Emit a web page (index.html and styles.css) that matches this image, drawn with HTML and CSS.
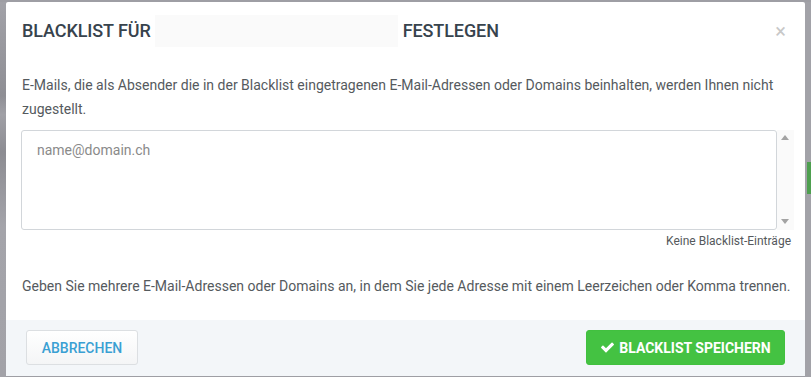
FILE: index.html
```html
<!DOCTYPE html>
<html lang="de">
<head>
<meta charset="utf-8">
<title>Blacklist</title>
<link rel="stylesheet" href="styles.css">
</head>
<body>
<div class="backdrop">
  <div class="side-strip"></div>
  <div class="modal">
    <div class="modal-header">
      <h4 class="modal-title">BLACKLIST FÜR <span class="redacted"></span> FESTLEGEN</h4>
      <span class="close">×</span>
    </div>
    <div class="modal-body">
      <p class="intro">E-Mails, die als Absender die in der Blacklist eingetragenen E-Mail-Adressen oder Domains beinhalten, werden Ihnen nicht zugestellt.</p>
      <div class="field">
        <div class="textarea"><span class="placeholder">name@domain.ch</span></div>
        <div class="scrollbar">
          <span class="arrow up"></span>
          <span class="arrow down"></span>
        </div>
      </div>
      <div class="count">Keine Blacklist-Einträge</div>
      <p class="hint">Geben Sie mehrere E-Mail-Adressen oder Domains an, in dem Sie jede Adresse mit einem Leerzeichen oder Komma trennen.</p>
    </div>
    <div class="modal-footer">
      <button class="btn btn-default">ABBRECHEN</button>
      <button class="btn btn-success"><svg class="check" viewBox="0 300 1792 1250" width="15" height="11"><path d="M1671 566q0 40-28 68l-724 724-136 136q-28 28-68 28t-68-28l-136-136-362-362q-28-28-28-68t28-68l136-136q28-28 68-28t68 28l294 295 656-657q28-28 68-28t68 28l136 136q28 28 28 68z" fill="#fff"/></svg>BLACKLIST SPEICHERN</button>
    </div>
  </div>
  <div class="side-right"><span class="green"></span></div>
</div>
</body>
</html>
```
FILE: styles.css
```css
html, body {
  margin: 0;
  padding: 0;
  height: 100%;
}
body {
  background: #9e9ea4;
  font-family: Roboto, "Liberation Sans", sans-serif;
  color: #555a5e;
  overflow: hidden;
}
.backdrop {
  display: flex;
  height: 100%;
  padding-top: 2px;
  box-sizing: border-box;
}
.side-strip {
  width: 6px;
  flex: none;
  background: linear-gradient(180deg, #a2a2a8 0%, #8e8e94 25%, #a0a0a6 30%, #8c8c92 40%, #a4a4aa 60%, #a2a2a8 100%);
}
.side-right {
  flex: 1;
  background: #a2a2a8;
  position: relative;
}
.green {
  position: absolute;
  left: 2px;
  top: 160px;
  width: 4px;
  height: 32px;
  background: #3f9f3f;
  opacity: 0.85;
}
.modal {
  width: 799px;
  flex: none;
  height: 374px;
  background: #fff;
  display: flex;
  flex-direction: column;
  border-radius: 2px 2px 0 0;
}
.modal-header {
  display: flex;
  align-items: center;
  justify-content: space-between;
  padding: 13px 16px 13px 16px;
}
.modal-title {
  margin: 0;
  font-size: 18px;
  font-weight: 500;
  line-height: 32px;
  color: #37434d;
  display: flex;
  align-items: center;
  letter-spacing: -0.1px;
}
.redacted {
  display: inline-block;
  width: 243px;
  height: 32px;
  background: #fafafa;
  margin: 0 5px 0 4px;
}
.close {
  font-size: 20px;
  color: #c8c8c8;
  line-height: 20px;
  margin-right: 3px;
}
.modal-body {
  padding: 13px 11px 0 16px;
  flex: 1;
}
.intro, .hint {
  margin: 0;
  font-size: 14px;
  line-height: 24px;
}
.intro {
  margin-bottom: 9px;
}
.field {
  display: flex;
  height: 100px;
  margin-left: -1px;
}
.textarea {
  flex: 1;
  border: 1px solid #d2d6da;
  border-radius: 3px;
  padding: 9px 15px;
  box-sizing: border-box;
}
.placeholder {
  font-size: 14px;
  line-height: 20px;
  color: #8a8a8a;
}
.scrollbar {
  width: 17px;
  background: #fafafa;
  position: relative;
}
.arrow {
  position: absolute;
  left: 4px;
  width: 0;
  height: 0;
  border-left: 4px solid transparent;
  border-right: 4px solid transparent;
}
.arrow.up {
  top: 5px;
  border-bottom: 5px solid #a3a3a3;
}
.arrow.down {
  bottom: 6px;
  border-top: 5px solid #a3a3a3;
}
.count {
  text-align: right;
  font-size: 12px;
  line-height: 16px;
  margin-top: 3px;
  padding-right: 3px;
  color: #55595c;
}
.hint {
  margin-top: 25px;
}
.modal-footer {
  background: #f3f6f9;
  height: 56px;
  box-sizing: border-box;
  padding: 10px 20px 11px 20px;
  display: flex;
  justify-content: space-between;
  align-items: flex-start;
}
.btn {
  height: 35px;
  font-family: Roboto, "Liberation Sans", sans-serif;
  font-size: 14px;
  border-radius: 3px;
  display: flex;
  align-items: center;
  justify-content: center;
  cursor: pointer;
}
.btn-default {
  width: 112px;
  border: 1px solid #dcdfe2;
  background: linear-gradient(180deg, #ffffff, #f4f5f6);
  color: #3aa0d3;
  font-weight: 500;
}
.btn-success {
  width: 199px;
  border: 1px solid #41c03f;
  background: #44c242;
  color: #fff;
  font-weight: 700;
}
.check {
  margin-right: 4px;
}
```
